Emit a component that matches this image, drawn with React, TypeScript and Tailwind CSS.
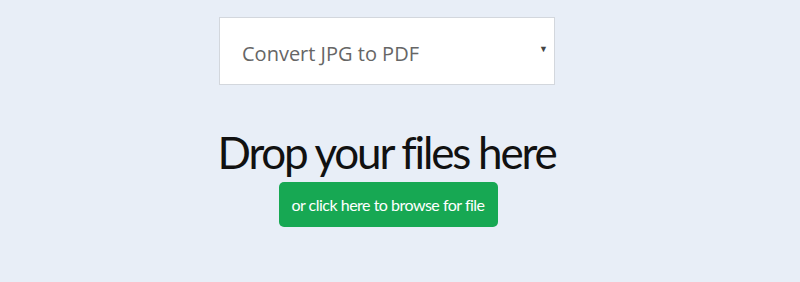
export default function App() {
    return (
        <div className="min-h-[282px] w-[800px] bg-[#e8eef7] overflow-hidden font-['Open_Sans',sans-serif]">
            <div className="flex flex-col items-center pt-[17px]">
                <div className="ml-[-26px] flex h-[68px] w-[336px] items-center justify-between border border-[#d3d7dd] bg-white pl-[22px] pr-[6px] pt-[6px]">
                    <span className="text-[20px] text-[#666]">Convert JPG to PDF</span>
                    <span className="mb-[10px] text-[9px] text-[#444]">▼</span>
                </div>

                <h1 className="ml-[-27px] mt-[42px] text-[44px] leading-[50px] tracking-[-2.2px] text-[#111] font-['Lato',sans-serif]">
                    Drop your files here
                </h1>

                <button className="ml-[-24px] mt-[5px] h-[45px] w-[219px] rounded-[5px] bg-[#17a853] text-[16px] tracking-[-0.5px] text-white font-['Lato',sans-serif]">
                    or click here to browse for file
                </button>
            </div>
        </div>
    );
}
